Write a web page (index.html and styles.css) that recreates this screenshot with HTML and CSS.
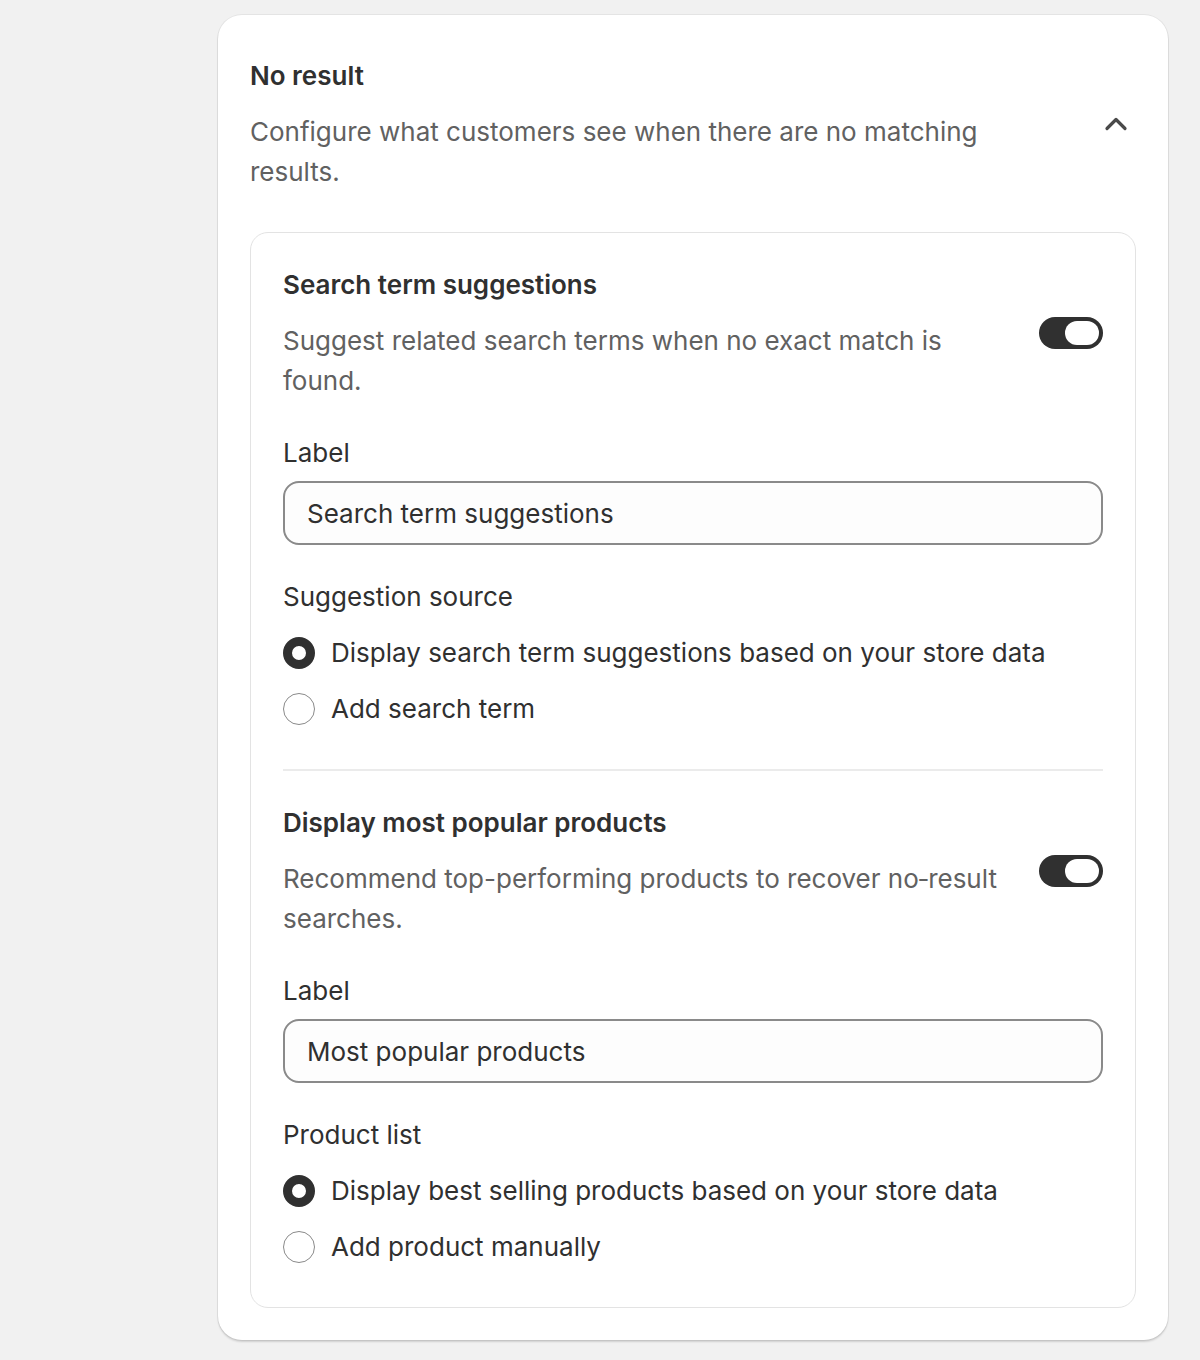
FILE: index.html
```html
<!DOCTYPE html>
<html lang="en">
<head>
    <meta charset="UTF-8">
    <meta name="viewport" content="width=device-width, initial-scale=1.0">
    <title>No result settings</title>
    <link rel="stylesheet" href="styles.css">
</head>
<body>
    <div class="page">
        <div class="card">
            <div class="card-header">
                <div class="header-text">
                    <h2 class="card-title">No result</h2>
                    <p class="card-desc">Configure what customers see when there are no matching results.</p>
                </div>
                <button class="collapse-btn" aria-label="Collapse">
                    <svg width="40" height="40" viewBox="0 0 20 20">
                        <path d="M5.5 12.25 10 7.75l4.5 4.5" fill="none" stroke="#4a4a4a" stroke-width="1.6" stroke-linecap="round" stroke-linejoin="round"/>
                    </svg>
                </button>
            </div>

            <div class="settings-box">
                <div class="setting">
                    <div class="setting-head">
                        <div class="setting-text">
                            <h3 class="setting-title">Search term suggestions</h3>
                            <p class="setting-desc">Suggest related search terms when no exact match is found.</p>
                        </div>
                        <label class="toggle">
                            <input type="checkbox" checked>
                            <span class="toggle-track"><span class="toggle-knob"></span></span>
                        </label>
                    </div>
                    <div class="field">
                        <label class="field-label" for="label-1">Label</label>
                        <input class="text-input" id="label-1" type="text" value="Search term suggestions">
                    </div>
                    <div class="field">
                        <div class="field-label">Suggestion source</div>
                        <div class="radio-group">
                            <label class="radio">
                                <input type="radio" name="source" checked>
                                <span class="radio-dot"></span>
                                <span>Display search term suggestions based on your store data</span>
                            </label>
                            <label class="radio">
                                <input type="radio" name="source">
                                <span class="radio-dot"></span>
                                <span>Add search term</span>
                            </label>
                        </div>
                    </div>
                </div>

                <div class="divider"></div>

                <div class="setting">
                    <div class="setting-head">
                        <div class="setting-text">
                            <h3 class="setting-title">Display most popular products</h3>
                            <p class="setting-desc">Recommend top-performing products to recover no&#8209;result searches.</p>
                        </div>
                        <label class="toggle">
                            <input type="checkbox" checked>
                            <span class="toggle-track"><span class="toggle-knob"></span></span>
                        </label>
                    </div>
                    <div class="field">
                        <label class="field-label" for="label-2">Label</label>
                        <input class="text-input" id="label-2" type="text" value="Most popular products">
                    </div>
                    <div class="field">
                        <div class="field-label">Product list</div>
                        <div class="radio-group">
                            <label class="radio">
                                <input type="radio" name="products" checked>
                                <span class="radio-dot"></span>
                                <span>Display best selling products based on your store data</span>
                            </label>
                            <label class="radio">
                                <input type="radio" name="products">
                                <span class="radio-dot"></span>
                                <span>Add product manually</span>
                            </label>
                        </div>
                    </div>
                </div>
            </div>
        </div>
    </div>
</body>
</html>
```

FILE: styles.css
```css
* {
    box-sizing: border-box;
}

body {
    margin: 0;
    background-color: #f1f1f1;
    font-family: 'Inter', 'Noto Sans', sans-serif;
    font-size: 26px;
    line-height: 40px;
    color: #303030;
}

.page {
    padding: 15px 32px 20px 218px;
}

.card {
    width: 950px;
    background-color: #fff;
    border-radius: 24px;
    padding: 41px 32px 32px;
    box-shadow: 0 2px 2px rgba(0, 0, 0, 0.14), 0 0 0 1px rgba(0, 0, 0, 0.05);
}

.card-header {
    display: flex;
    align-items: center;
    gap: 24px;
}

.header-text {
    flex: 1;
    padding-right: 80px;
}

.card-title,
.setting-title {
    margin: 0;
    font-size: 26px;
    line-height: 40px;
    font-weight: 600;
    color: #303030;
}

.card-desc,
.setting-desc {
    margin: 16px 0 0;
    color: #616161;
}

.collapse-btn {
    width: 40px;
    height: 40px;
    padding: 0;
    border: none;
    background: none;
    cursor: pointer;
}

.collapse-btn svg {
    display: block;
}

.settings-box {
    margin-top: 40px;
    border: 1px solid #e3e3e3;
    border-radius: 18px;
    padding: 0 32px;
}

.setting {
    padding: 32px 0 40px;
}

.setting + .divider + .setting {
    padding-top: 32px;
}

.setting-head {
    display: flex;
    align-items: center;
    gap: 24px;
}

.setting-text {
    flex: 1;
}

.toggle {
    position: relative;
    flex-shrink: 0;
    cursor: pointer;
}

.toggle input {
    position: absolute;
    opacity: 0;
    width: 0;
    height: 0;
}

.toggle-track {
    display: flex;
    align-items: center;
    justify-content: flex-end;
    width: 64px;
    height: 32px;
    padding: 4px;
    border-radius: 16px;
    background-color: #303030;
}

.toggle-knob {
    width: 34px;
    height: 24px;
    border-radius: 12px;
    background-color: #fff;
}

.field {
    margin-top: 32px;
}

.field-label {
    display: block;
    color: #303030;
}

.text-input {
    display: block;
    width: 100%;
    height: 64px;
    margin-top: 8px;
    padding: 0 22px;
    border: 2px solid #8a8a8a;
    border-radius: 16px;
    background-color: #fdfdfd;
    font-family: inherit;
    font-size: 26px;
    color: #303030;
    outline: none;
}

.radio-group {
    display: flex;
    flex-direction: column;
    gap: 16px;
    margin-top: 16px;
}

.radio {
    display: flex;
    align-items: center;
    gap: 16px;
    cursor: pointer;
}

.radio input {
    position: absolute;
    opacity: 0;
    width: 0;
    height: 0;
}

.radio-dot {
    width: 32px;
    height: 32px;
    flex-shrink: 0;
    border-radius: 50%;
    border: 1.5px solid #8a8a8a;
    background-color: #fff;
}

.radio input:checked + .radio-dot {
    border: 9px solid #303030;
}

.divider {
    height: 2px;
    background-color: #ebebeb;
}
```
